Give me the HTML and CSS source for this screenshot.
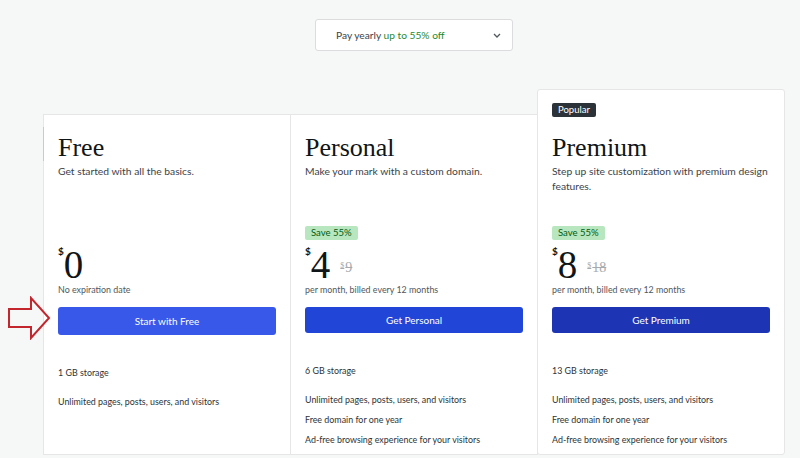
FILE: index.html
```html
<!DOCTYPE html>
<html lang="en">
<head>
<meta charset="utf-8">
<title>Plans</title>
<link rel="stylesheet" href="styles.css">
</head>
<body>
<div class="page">
  <div class="term-row">
    <button class="term-select" type="button">
      <span class="term-label">Pay yearly <span class="term-off">up to 55% off</span></span>
      <svg class="chev" width="8" height="5" viewBox="0 0 8 5"><path d="M1 1l3 3 3-3" fill="none" stroke="#50575e" stroke-width="1.3"/></svg>
    </button>
  </div>

  <div class="plans">
    <section class="plan plan-first">
      <div class="plan-head">
        <h2 class="plan-name">Free</h2>
        <p class="plan-desc">Get started with all the basics.</p>
      </div>
      <div class="badge-slot"></div>
      <div class="price-row">
        <span class="cur">$</span><span class="amount">0</span>
      </div>
      <p class="price-note">No expiration date</p>
      <button class="cta cta-free" type="button">Start with Free</button>
      <ul class="features">
        <li class="storage">1 GB storage</li>
        <li>Unlimited pages, posts, users, and visitors</li>
      </ul>
    </section>

    <section class="plan">
      <div class="plan-head">
        <h2 class="plan-name">Personal</h2>
        <p class="plan-desc">Make your mark with a custom domain.</p>
      </div>
      <div class="badge-slot"><span class="save">Save 55%</span></div>
      <div class="price-row">
        <span class="cur">$</span><span class="amount">4</span>
        <span class="was"><span class="was-cur">$</span>9</span>
      </div>
      <p class="price-note">per month, billed every 12 months</p>
      <button class="cta cta-personal" type="button">Get Personal</button>
      <ul class="features">
        <li class="storage">6 GB storage</li>
        <li>Unlimited pages, posts, users, and visitors</li>
        <li>Free domain for one year</li>
        <li>Ad-free browsing experience for your visitors</li>
      </ul>
    </section>

    <section class="plan plan-popular">
      <span class="popular">Popular</span>
      <div class="plan-head">
        <h2 class="plan-name">Premium</h2>
        <p class="plan-desc">Step up site customization with premium design features.</p>
      </div>
      <div class="badge-slot"><span class="save">Save 55%</span></div>
      <div class="price-row">
        <span class="cur">$</span><span class="amount">8</span>
        <span class="was"><span class="was-cur">$</span>18</span>
      </div>
      <p class="price-note">per month, billed every 12 months</p>
      <button class="cta cta-premium" type="button">Get Premium</button>
      <ul class="features">
        <li class="storage">13 GB storage</li>
        <li>Unlimited pages, posts, users, and visitors</li>
        <li>Free domain for one year</li>
        <li>Ad-free browsing experience for your visitors</li>
      </ul>
    </section>
  </div>

  <svg class="pointer" width="44" height="44" viewBox="0 0 44 44">
    <path d="M2 13h22V2l18 20-18 20V31H2z" fill="none" stroke="#c4262e" stroke-width="2" stroke-linejoin="miter"/>
  </svg>
</div>
</body>
</html>
```

FILE: styles.css
```css
* { box-sizing: border-box; }

html, body {
  margin: 0;
  padding: 0;
  background: #f6f7f7;
  overflow: hidden;
}

body {
  font-family: Lato, "Noto Sans", sans-serif;
  color: #1e1e1e;
}

.page {
  position: relative;
  width: 800px;
  height: 458px;
  padding-top: 19px;
}

/* billing term dropdown */
.term-row {
  display: flex;
  padding-left: 315px;
}

.term-select {
  width: 198px;
  height: 32px;
  display: flex;
  align-items: center;
  justify-content: space-between;
  padding: 0 11px 0 20px;
  background: #fff;
  border: 1px solid #dcdcde;
  border-radius: 3px;
  font-family: inherit;
  font-size: 10.2px;
  color: #3c434a;
}

.term-off { color: #1e8a32; }

/* plan cards */
.plans {
  display: flex;
  align-items: stretch;
  margin: 63px 0 0 43px;
  width: 743px;
  height: 341px;
}

.plan {
  flex: 0 0 248px;
  display: flex;
  flex-direction: column;
  align-items: flex-start;
  background: #fff;
  border: 1px solid #e6e6e6;
  padding: 18px 14px 6px;
}

.plan + .plan { margin-left: -1px; }

.plan-first { position: relative; }
.plan-first::before {
  content: "";
  position: absolute;
  left: -1px;
  top: 12px;
  width: 1px;
  height: 34px;
  background: #c9cacc;
}

.plan-popular {
  margin-top: -25px;
  padding-top: 13px;
  border-radius: 3px;
}

.popular {
  height: 14px;
  line-height: 14px;
  padding: 0 6px;
  margin-bottom: 16px;
  background: #2c3338;
  color: #fff;
  font-size: 9.5px;
  border-radius: 2px;
}

.plan-head {
  min-height: 93px;
}

.plan-name {
  margin: 0;
  font-family: "Liberation Serif", serif;
  font-weight: 400;
  font-size: 26px;
  line-height: 30px;
  color: #101517;
}

.plan-desc {
  margin: 1px 0 0;
  font-size: 10.3px;
  line-height: 15px;
  color: #3c434a;
}

.badge-slot {
  height: 14px;
  display: flex;
}

.save {
  height: 14px;
  line-height: 14px;
  padding: 0 6px;
  background: #b8e6bf;
  color: #005c12;
  font-size: 9.5px;
  border-radius: 2px;
}

.price-row {
  display: flex;
  align-items: flex-start;
  height: 37px;
  margin-top: 6px;
}

.cur {
  font-size: 10px;
  font-weight: 700;
  line-height: 10px;
  color: #101517;
}

.amount {
  font-family: "Liberation Serif", serif;
  font-size: 39px;
  line-height: 37px;
  color: #101517;
}

.was {
  margin: 13px 0 0 10px;
  font-family: "Liberation Serif", serif;
  font-size: 14px;
  line-height: 14px;
  color: #a7aaad;
  text-decoration: line-through;
}

.was-cur {
  font-size: 8px;
  vertical-align: 4px;
  margin-right: 1px;
}

.price-note {
  margin: 0;
  font-size: 8.9px;
  line-height: 14px;
  color: #50575e;
}

.cta {
  width: 218px;
  height: 28px;
  margin-top: 10px;
  border: 0;
  border-radius: 3px;
  font-family: inherit;
  font-size: 10px;
  color: #fff;
}

.cta-free { background: #3858e9; }
.cta-personal { background: #2145d6; }
.cta-premium { background: #1d35b4; }

.features {
  list-style: none;
  margin: 30px 0 0;
  padding: 0;
  font-size: 8.9px;
  line-height: 16px;
  color: #2c3338;
}

.features li { margin-top: 4px; }
.features li:first-child { margin-top: 0; }
.features .storage { margin-bottom: 13px; }

/* annotation arrow over the free plan button */
.pointer {
  position: absolute;
  left: 7px;
  top: 296px;
}
```
